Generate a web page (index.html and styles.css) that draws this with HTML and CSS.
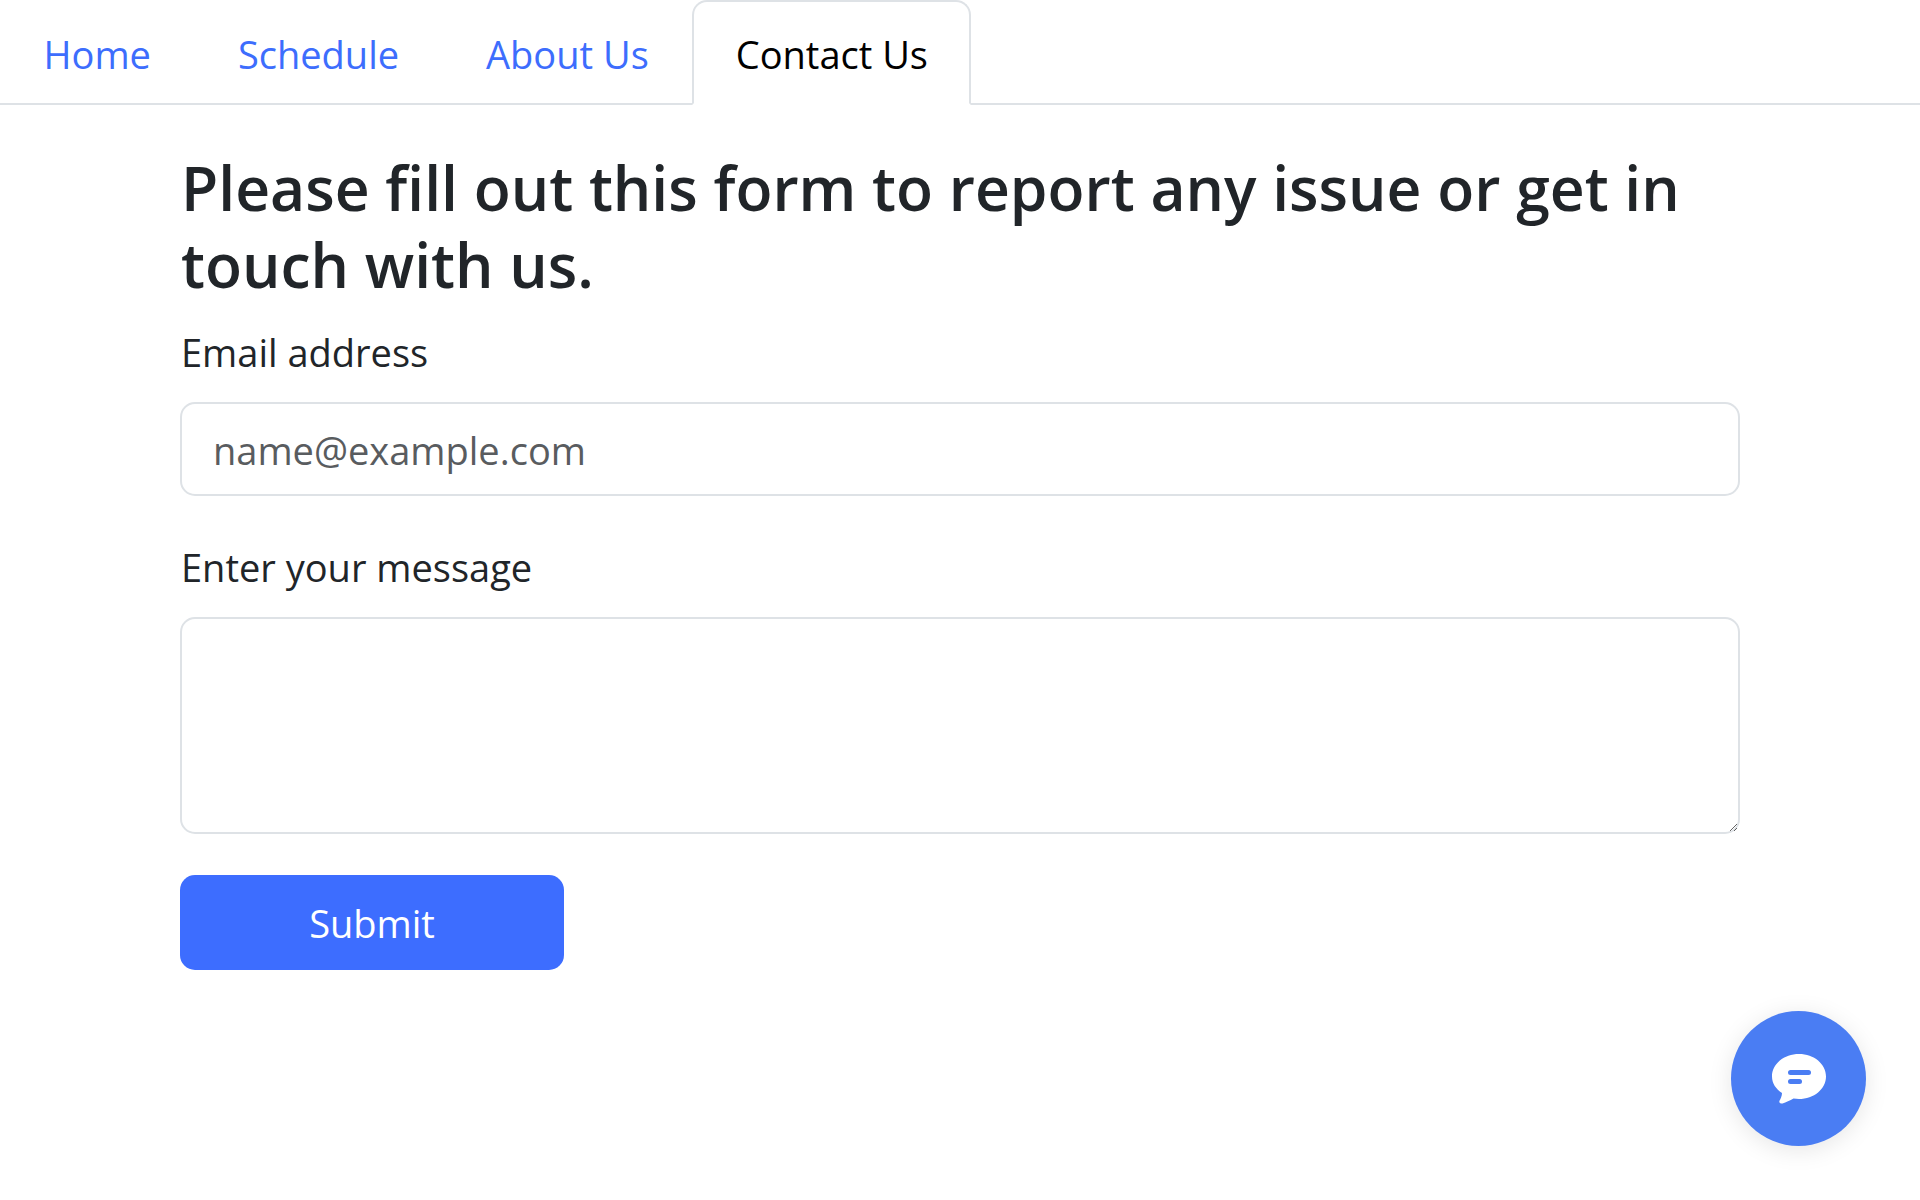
FILE: index.html
```html
<!DOCTYPE html>
<html lang="en">
<head>
<meta charset="utf-8">
<title>Contact Us</title>
<link rel="stylesheet" href="styles.css">
</head>
<body>
<nav class="tabs">
  <a class="tab" href="#">Home</a>
  <a class="tab" href="#">Schedule</a>
  <a class="tab" href="#">About Us</a>
  <a class="tab active" href="#">Contact Us</a>
</nav>
<main class="container">
  <h1 class="title">Please fill out this form to report any issue or get in touch with us.</h1>
  <form class="form">
    <div class="field">
      <label class="label" for="email">Email address</label>
      <input class="control" id="email" type="email" placeholder="name@example.com">
    </div>
    <div class="field">
      <label class="label" for="msg">Enter your message</label>
      <textarea class="control area" id="msg"></textarea>
    </div>
    <button class="submit" type="button">Submit</button>
  </form>
</main>
<button class="chat" type="button" aria-label="Chat">
  <svg class="chat-icon" viewBox="0 0 54 50" width="54" height="50">
    <path fill="#fff" d="M27 0C12 0 0 10 0 22.500 0 29.500 4 35 10 39 10 42 8.500 45 7.600 46.600 6.600 48.600 8 50 10.500 49.400 14 48.300 18 46.500 21.500 44.500 23.500 44.800 25 45 27 45 42 45 54 35 54 22.500S42 0 27 0z"/>
    <rect x="16" y="16" width="23" height="5" rx="2.500" fill="#4a7df3"/>
    <rect x="16" y="25" width="14" height="5" rx="2.500" fill="#4a7df3"/>
  </svg>
</button>
</body>
</html>
```
FILE: styles.css
```css
* { box-sizing: border-box; }
html, body { height: 100%; }
body {
  margin: 0;
  background: #fff;
  color: #212529;
  font-family: "Open Sans", "Noto Sans", sans-serif;
  font-size: 38px;
  line-height: 60px;
}
.tabs {
  display: flex;
  height: 105px;
  border-bottom: 2px solid #dee2e6;
}
.tab {
  display: block;
  height: 105px;
  padding: 22px 41.5px 0;
  border: 2px solid transparent;
  border-bottom: 0;
  border-radius: 15px 15px 0 0;
  color: #3d6dfd;
  text-decoration: none;
}
.tab.active {
  background: #fff;
  color: #000;
  border-color: #dee2e6;
  border-bottom: 2px solid #fff;
}
.container {
  width: 1560px;
  margin-left: 180px;
  padding-top: 43px;
}
.title {
  margin: 0 0 19px;
  padding: 1px 0 0 1px;
  font-size: 60.6px;
  line-height: 77px;
  font-weight: 600;
}
.field { margin-bottom: 41px; }
.label {
  display: block;
  margin-bottom: 20px;
  padding-left: 1px;
}
.control {
  display: block;
  width: 100%;
  height: 94px;
  padding: 16px 31px 14px;
  border: 2px solid #dee2e6;
  border-radius: 15px;
  background: #fff;
  color: #212529;
  font: inherit;
  outline: 0;
}
.control::placeholder { color: #595c5f; opacity: 1; }
.area { height: 217px; resize: vertical; }
.submit {
  display: block;
  width: 384px;
  height: 95px;
  padding: 0;
  border: 0;
  border-radius: 15px;
  background: #3d6dff;
  color: #fff;
  font: inherit;
}
.chat {
  position: fixed;
  left: 1731px;
  top: 1011px;
  display: flex;
  align-items: center;
  justify-content: center;
  width: 135px;
  height: 135px;
  padding: 0;
  border: 0;
  border-radius: 50%;
  background: #4a7df3;
  box-shadow: 0 4px 24px rgba(0, 0, 0, 0.1);
}
.chat-icon { display: block; }
```
